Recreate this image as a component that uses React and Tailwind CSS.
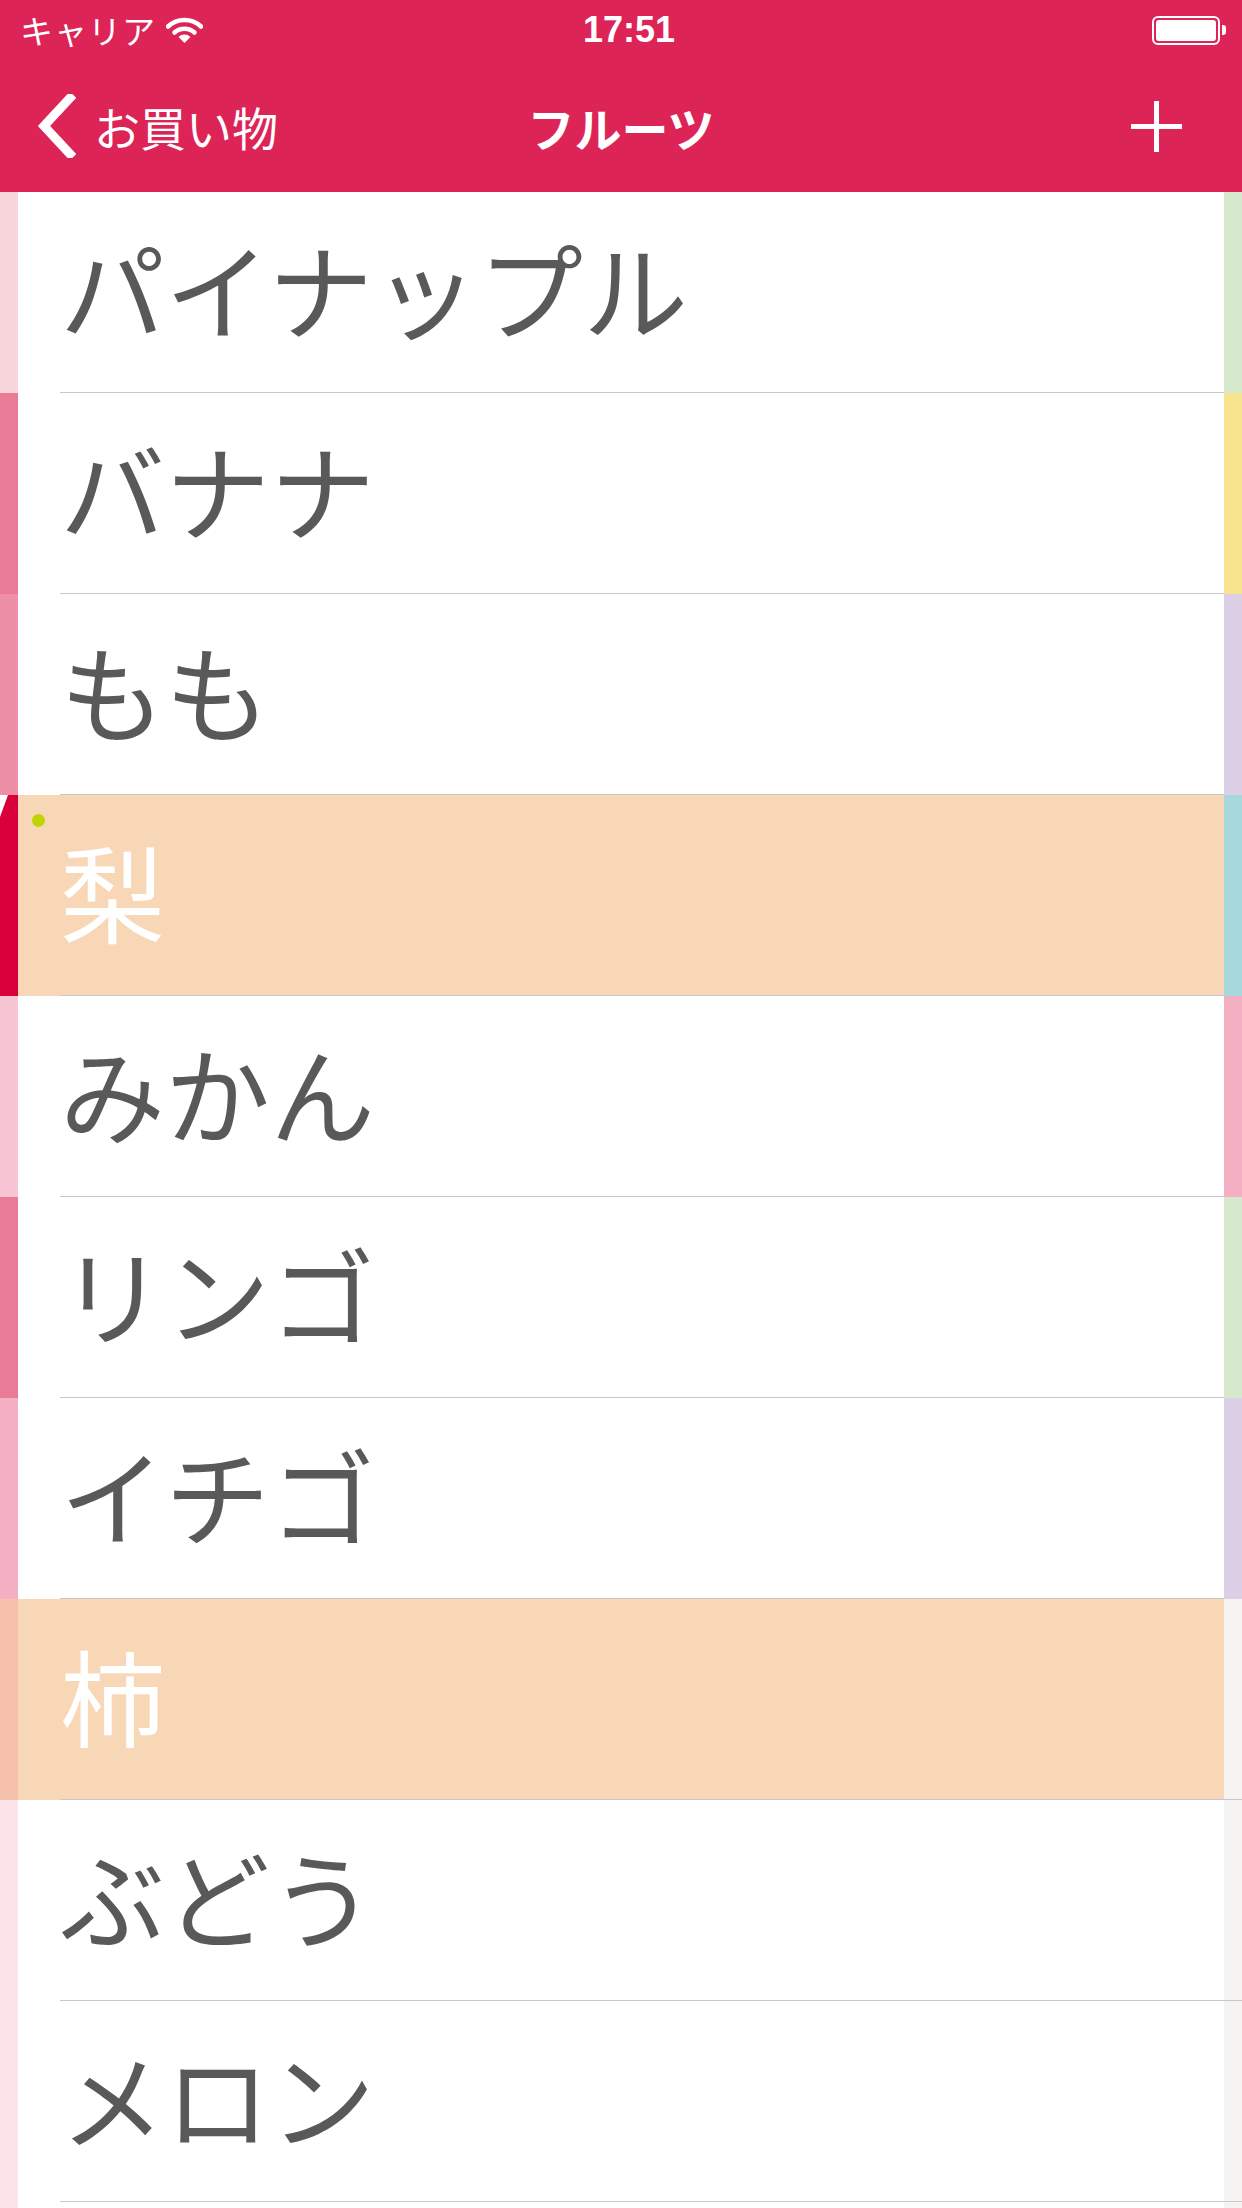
import React from 'react';

const JP = { fontFamily: '"Noto Sans CJK JP", "Noto Sans", sans-serif' };

const ROWS = [
  { name: 'パイナップル', left: 'bg-[#f9d5dc]', right: 'bg-[#d7e9cd]' },
  { name: 'バナナ', left: 'bg-[#ea7b96]', right: 'bg-[#f8e48f]' },
  { name: 'もも', left: 'bg-[#ee8fa8]', right: 'bg-[#dcd0e6]' },
  { name: '梨', left: 'bg-[#d8003a]', right: 'bg-[#a6d8de]', done: true, dot: true, corner: true },
  { name: 'みかん', left: 'bg-[#f6c4d2]', right: 'bg-[#f4b0c2]' },
  { name: 'リンゴ', left: 'bg-[#ea7b96]', right: 'bg-[#d7e9cd]' },
  { name: 'イチゴ', left: 'bg-[#f4b0c2]', right: 'bg-[#dcd0e6]' },
  { name: '柿', left: 'bg-[#f7c2ab]', right: 'bg-[#f5f4f2]', done: true, fullLine: true },
  { name: 'ぶどう', left: 'bg-[#fbe3e8]', right: 'bg-[#f5f4f2]', fullLine: true },
  { name: 'メロン', left: 'bg-[#fbe3e8]', right: 'bg-[#f5f4f2]', fullLine: true },
  { name: '', left: 'bg-[#fbe3e8]', right: 'bg-[#f5f4f2]', fullLine: true },
];

function StatusBar() {
  return (
    <div className="h-[60px] flex items-center justify-between pl-[20px] pr-[16px] text-white relative">
      <div className="flex items-center gap-[10px]">
        <span className="text-[33px] leading-none tracking-[1px]" style={JP}>キャリア</span>
        <svg width="37" height="27" viewBox="0 0 37 27">
          <path d="M2 9.5 A24 24 0 0 1 35 9.5" stroke="white" strokeWidth="4.5" fill="none" strokeLinecap="round" />
          <path d="M8.5 15.5 A15 15 0 0 1 28.5 15.5" stroke="white" strokeWidth="4.5" fill="none" strokeLinecap="round" />
          <path d="M18.5 26 L12.5 20 A8.5 8.5 0 0 1 24.5 20 Z" fill="white" />
        </svg>
      </div>
      <span className="absolute left-[583px] text-[36px] font-semibold leading-none" style={{ fontFamily: '"Liberation Sans", sans-serif' }}>
        17:51
      </span>
      <div className="flex items-center">
        <div className="w-[68px] h-[29px] rounded-[6px] border-[2px] border-white p-[2px]">
          <div className="w-full h-full bg-white rounded-[3px]" />
        </div>
        <div className="w-[4px] h-[10px] bg-white rounded-r-[3px] ml-[2px]" />
      </div>
    </div>
  );
}

function NavBar() {
  return (
    <div className="h-[132px] flex items-center relative text-white">
      <div className="flex items-center pl-[36px] gap-[18px]">
        <svg width="40" height="64" viewBox="0 0 40 64">
          <path d="M34 4 L8 32 L34 60" stroke="white" strokeWidth="9" fill="none" strokeLinecap="square" />
        </svg>
        <span className="text-[46px] leading-none" style={JP}>お買い物</span>
      </div>
      <span className="absolute left-1/2 -translate-x-1/2 text-[47px] font-bold leading-none" style={JP}>
        フルーツ
      </span>
      <div className="ml-auto mr-[60px] w-[51px] h-[51px] flex items-center justify-center">
        <svg width="51" height="51" viewBox="0 0 51 51">
          <rect x="23" y="0" width="5" height="51" fill="white" />
          <rect x="0" y="23" width="51" height="5" fill="white" />
        </svg>
      </div>
    </div>
  );
}

function Row({ row }) {
  return (
    <div className="h-[201px] flex">
      <div className={`w-[18px] ${row.left} relative`}>
        {row.corner && (
          <svg className="absolute left-0 top-0" width="9" height="24" viewBox="0 0 9 24">
            <polygon points="0,0 8,0 0,22" fill="white" />
          </svg>
        )}
      </div>
      <div className={`flex-1 flex flex-col relative ${row.done ? 'bg-[#f8d7b7]' : 'bg-white'}`}>
        {row.dot && <div className="absolute left-[14px] top-[19px] w-[13px] h-[13px] rounded-full bg-[#bfd400]" />}
        <div className="flex-1 flex items-center pl-[42px] pb-[12px]">
          <span className={`text-[105px] leading-none ${row.done ? 'text-white' : 'text-[#595959]'}`} style={JP}>
            {row.name}
          </span>
        </div>
        <div className="h-[1px] ml-[42px] bg-[#c8c7cc]" />
      </div>
      <div className={`w-[18px] ${row.right} flex flex-col`}>
        <div className="flex-1" />
        {row.fullLine && <div className="h-[1px] bg-[#c8c7cc]" />}
      </div>
    </div>
  );
}

export default function App() {
  return (
    <div className="w-[1242px] h-[2208px] overflow-hidden bg-white">
      <div className="bg-[#dd2457]">
        <StatusBar />
        <NavBar />
      </div>
      <div>
        {ROWS.map((row, i) => (
          <Row key={i} row={row} />
        ))}
      </div>
    </div>
  );
}
